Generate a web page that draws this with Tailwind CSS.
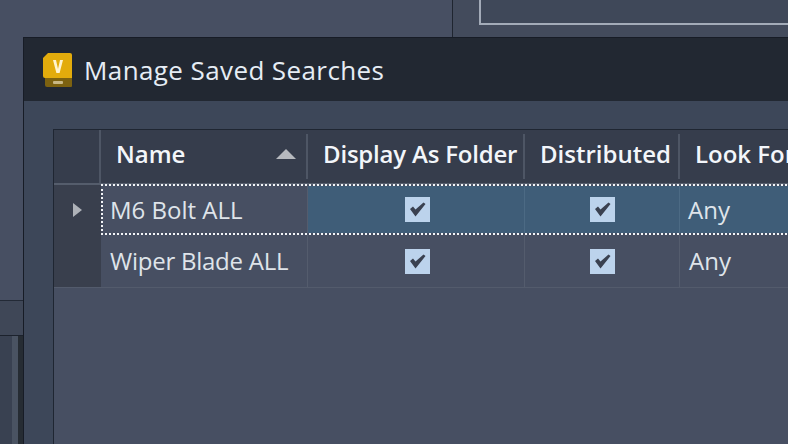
<!DOCTYPE html>
<html lang="en">
  <head>
    <meta charset="UTF-8" />
    <title>Manage Saved Searches</title>
    <script src="https://cdn.jsdelivr.net/npm/@tailwindcss/browser@4"></script>
  </head>
  <body class="relative w-[788px] h-[444px] overflow-hidden bg-[#474f62] font-['Open_Sans','Noto_Sans',sans-serif]">
    <!-- windows behind the dialog -->
    <div class="absolute left-[452px] top-0 w-[336px] h-[37px] border-l border-[#1f2530] bg-[#434b5c]">
      <div class="ml-[26px] h-[25px] border-l-2 border-b-2 border-[#a3abb8] bg-[#3f4859]"></div>
    </div>
    <div class="absolute left-0 top-[300px] w-[23px] h-[144px] flex flex-col">
      <div class="h-[36px] border-t border-b border-t-[#232a36] border-b-[#1c222d] bg-[#3f4757]"></div>
      <div class="flex-1 flex">
        <div class="w-[12px] bg-[#394151]"></div>
        <div class="w-[6px] bg-[#4a5362]"></div>
        <div class="w-[5px] bg-[#262c33]"></div>
      </div>
    </div>

    <!-- dialog, runs past the right edge of the shot -->
    <div class="absolute left-[23px] top-[37px] w-[900px] h-[407px] border-l border-t border-[#171c26] flex flex-col">
      <div class="h-[63px] shrink-0 bg-[#222832] flex items-center pl-[18px] gap-[10px]">
        <svg width="32" height="36" viewBox="0 0 32 36" class="shrink-0">
          <path d="M1 6 L6 1 H28 Q30 1 30 3 V26 H3 Q1 26 1 24 Z" fill="#e3ac0c" />
          <path d="M3 26 H30 V34 Q30 35 29 35 H5 Q3 35 3 33 Z" fill="#7d6210" />
          <path d="M11 8 H14 L16 17 L18 8 H21 L17.6 21 H14.4 Z" fill="#fff4cf" />
          <rect x="11" y="29" width="10" height="3" rx="1" fill="#c9b884" />
        </svg>
        <span class="text-[26px] leading-none tracking-[0.4px] text-[#e6edf5] mt-[1px]">Manage Saved Searches</span>
      </div>
      <div class="flex-1 bg-[#3d4759] pl-[29px] pt-[28px]">
        <div class="h-full bg-[#474f62] border-l border-t border-[#1f2632] text-[#dfe4ea]">
          <!-- header -->
          <div class="flex h-[55px] bg-[#363d4c] border-b-2 border-[#555d6c] text-[24px] font-semibold text-[#f3f6fa]">
            <div class="w-[47px] shrink-0 border-r-2 border-[#4e5665]"></div>
            <div class="w-[207px] shrink-0 flex items-center justify-between pl-[15px] pr-[10px] pb-[6px] border-r-2 border-[#4e5665] my-[4px]">
              <span>Name</span>
              <svg width="20" height="10" viewBox="0 0 20 10"><path d="M10 0 L20 10 H0 Z" fill="#b6b9be" /></svg>
            </div>
            <div class="w-[217px] shrink-0 flex items-center pl-[15px] pb-[6px] border-r-2 border-[#4e5665] my-[4px] whitespace-nowrap tracking-[-0.2px]">Display As Folder</div>
            <div class="w-[155px] shrink-0 flex items-center pl-[15px] pb-[6px] border-r-2 border-[#4e5665] my-[4px] whitespace-nowrap">Distributed</div>
            <div class="flex-1 flex items-center pl-[15px] pb-[6px] whitespace-nowrap">Look For</div>
          </div>
          <!-- row 1 -->
          <div class="flex h-[50px] text-[24px]">
            <div class="w-[47px] shrink-0 bg-[#393f4d] flex items-center justify-center">
              <svg width="9" height="14" viewBox="0 0 9 14"><path d="M0 0 L9 7 L0 14 Z" fill="#aeb2b8" /></svg>
            </div>
            <div class="flex-1 flex border-2 border-dotted border-[#f2f4f7] -mt-px">
              <div class="w-[205px] flex items-center pl-[7px] border-r border-[#545c6d] bg-[#474f62]">M6 Bolt ALL</div>
              <div class="w-[217px] flex items-center justify-center pl-[2px] border-r border-[#4c6a84] bg-[#3f5d78]">
                <svg width="25" height="25" viewBox="0 0 25 25"><rect width="25" height="25" fill="#bcd3ec" /><path d="M5 12 L8 9.5 L10.5 12.5 L18.5 5.5 L20.5 7 L10.5 19.5 Z" fill="#3a4150" /></svg>
              </div>
              <div class="w-[155px] flex items-center justify-center pl-[1px] border-r border-[#4c6a84] bg-[#3f5d78]">
                <svg width="25" height="25" viewBox="0 0 25 25"><rect width="25" height="25" fill="#bcd3ec" /><path d="M5 12 L8 9.5 L10.5 12.5 L18.5 5.5 L20.5 7 L10.5 19.5 Z" fill="#3a4150" /></svg>
              </div>
              <div class="flex-1 flex items-center pl-[8px] bg-[#3f5d78]">Any</div>
            </div>
          </div>
          <!-- row 2 -->
          <div class="flex h-[53px] text-[24px] border-b border-[#535b6c]">
            <div class="w-[47px] shrink-0 bg-[#393f4d]"></div>
            <div class="w-[207px] shrink-0 flex items-center pl-[9px] border-r border-[#545c6d] tracking-[-0.25px]">Wiper Blade ALL</div>
            <div class="w-[217px] shrink-0 flex items-center justify-center pl-[2px] border-r border-[#545c6d]">
              <svg width="25" height="25" viewBox="0 0 25 25"><rect width="25" height="25" fill="#bcd3ec" /><path d="M5 12 L8 9.5 L10.5 12.5 L18.5 5.5 L20.5 7 L10.5 19.5 Z" fill="#3a4150" /></svg>
            </div>
            <div class="w-[155px] shrink-0 flex items-center justify-center pl-[1px] border-r border-[#545c6d]">
              <svg width="25" height="25" viewBox="0 0 25 25"><rect width="25" height="25" fill="#bcd3ec" /><path d="M5 12 L8 9.5 L10.5 12.5 L18.5 5.5 L20.5 7 L10.5 19.5 Z" fill="#3a4150" /></svg>
            </div>
            <div class="flex-1 flex items-center pl-[9px]">Any</div>
          </div>
        </div>
      </div>
    </div>
  </body>
</html>
